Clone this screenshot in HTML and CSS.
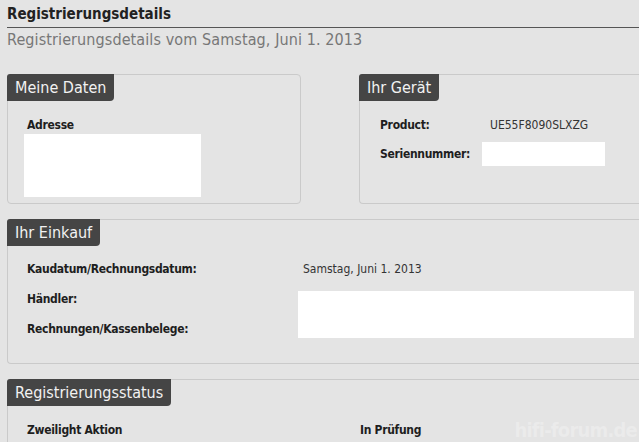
FILE: index.html
```html
<!DOCTYPE html>
<html lang="de">
<head>
<meta charset="utf-8">
<link rel="stylesheet" href="styles.css">
</head>
<body>
<div class="page">
  <h1 class="title">Registrierungsdetails</h1>
  <p class="subtitle">Registrierungsdetails vom Samstag, Juni 1. 2013</p>

  <div class="row-top">
    <section class="panel panel-daten">
      <h2 class="tab">Meine Daten</h2>
      <div class="body body-daten">
        <div class="label">Adresse</div>
        <div class="blank blank-addr"></div>
      </div>
    </section>
    <section class="panel panel-geraet">
      <h2 class="tab">Ihr Gerät</h2>
      <div class="body body-geraet">
        <div class="kv"><span class="label k-prod">Product:</span><span class="value">UE55F8090SLXZG</span></div>
        <div class="kv"><span class="label k-serial">Seriennummer:</span><span class="blank blank-serial"></span></div>
      </div>
    </section>
  </div>

  <section class="panel panel-wide panel-einkauf">
    <h2 class="tab">Ihr Einkauf</h2>
    <div class="body body-einkauf">
      <div class="labels">
        <div class="label">Kaudatum/Rechnungsdatum:</div>
        <div class="label">Händler:</div>
        <div class="label">Rechnungen/Kassenbelege:</div>
      </div>
      <div class="values">
        <div class="value">Samstag, Juni 1. 2013</div>
        <div class="blank blank-haendler"></div>
      </div>
    </div>
  </section>

  <section class="panel panel-wide panel-status">
    <h2 class="tab">Registrierungsstatus</h2>
    <div class="body body-status">
      <span class="label s-name">Zweilight Aktion</span>
      <span class="label">In Prüfung</span>
    </div>
  </section>
  <div class="watermark">hifi-forum.de</div>
</div>
</body>
</html>
```
FILE: styles.css
```css
html, body {
  margin: 0;
  padding: 0;
  background: #e4e4e4;
  overflow: hidden;
}
body {
  font-family: "DejaVu Sans Condensed", "DejaVu Sans", sans-serif;
  color: #222;
}
.page {
  position: relative;
  width: 639px;
  height: 442px;
  padding-left: 7px;
  box-sizing: border-box;
}
.title {
  margin: 0;
  padding-top: 5px;
  font-size: 15px;
  font-weight: bold;
  line-height: 18px;
  height: 22px;
  color: #222;
  border-bottom: 1px solid #555;
}
.subtitle {
  margin: 0;
  padding-top: 3px;
  font-size: 16px;
  line-height: 18px;
  color: #777;
  letter-spacing: 0.1px;
}
.row-top {
  display: flex;
  gap: 58px;
  margin-top: 25px;
}
.panel {
  border: 1px solid #cacaca;
  border-radius: 4px;
  box-sizing: border-box;
}
.panel-daten {
  width: 294px;
  height: 130px;
}
.panel-geraet {
  flex: 1;
  height: 130px;
  border-right: none;
  border-radius: 4px 0 0 4px;
}
.tab {
  display: inline-block;
  margin: -1px 0 0 -1px;
  background: #454545;
  color: #f2f2f2;
  font-size: 16px;
  font-weight: normal;
  line-height: 27px;
  height: 27px;
  padding: 0 8px;
  border-radius: 3px 0 4px 0;
}
.label {
  font-size: 12px;
  font-weight: bold;
  color: #1e1e1e;
  letter-spacing: -0.3px;
}
.value {
  font-size: 12px;
  color: #333;
}
.blank {
  background: #fff;
}
.body-daten {
  padding: 17px 0 0 16px;
}
.body-daten .label {
  padding-left: 3px;
}
.blank-addr {
  width: 177px;
  height: 63px;
  margin-top: 2px;
}
.body-geraet {
  padding: 12px 0 0 20px;
}
.kv {
  display: flex;
  align-items: center;
  height: 24px;
  margin-bottom: 5px;
}
.k-prod {
  width: 110px;
}
.k-serial {
  width: 102px;
}
.blank-serial {
  display: block;
  width: 123px;
  height: 24px;
}
.panel-wide {
  width: 640px;
  border-right: none;
  border-radius: 4px 0 0 4px;
}
.panel-einkauf {
  margin-top: 15px;
  height: 145px;
}
.body-einkauf {
  display: flex;
  padding: 16px 0 0 19px;
}
.labels {
  width: 271px;
  display: flex;
  flex-direction: column;
  gap: 15px;
}
.labels .label {
  line-height: 15px;
}
.values {
  display: flex;
  flex-direction: column;
}
.values .value {
  padding-left: 5px;
  line-height: 15px;
  height: 29px;
}
.blank-haendler {
  width: 336px;
  height: 47px;
}
.panel-status {
  margin-top: 15px;
  height: 80px;
}
.body-status {
  display: flex;
  padding: 17px 0 0 19px;
}
.s-name {
  width: 333px;
}
.watermark {
  position: absolute;
  right: 2px;
  bottom: 0;
  font-size: 20px;
  font-weight: bold;
  color: rgba(255,255,255,0.28);
  letter-spacing: -0.8px;
}
```
